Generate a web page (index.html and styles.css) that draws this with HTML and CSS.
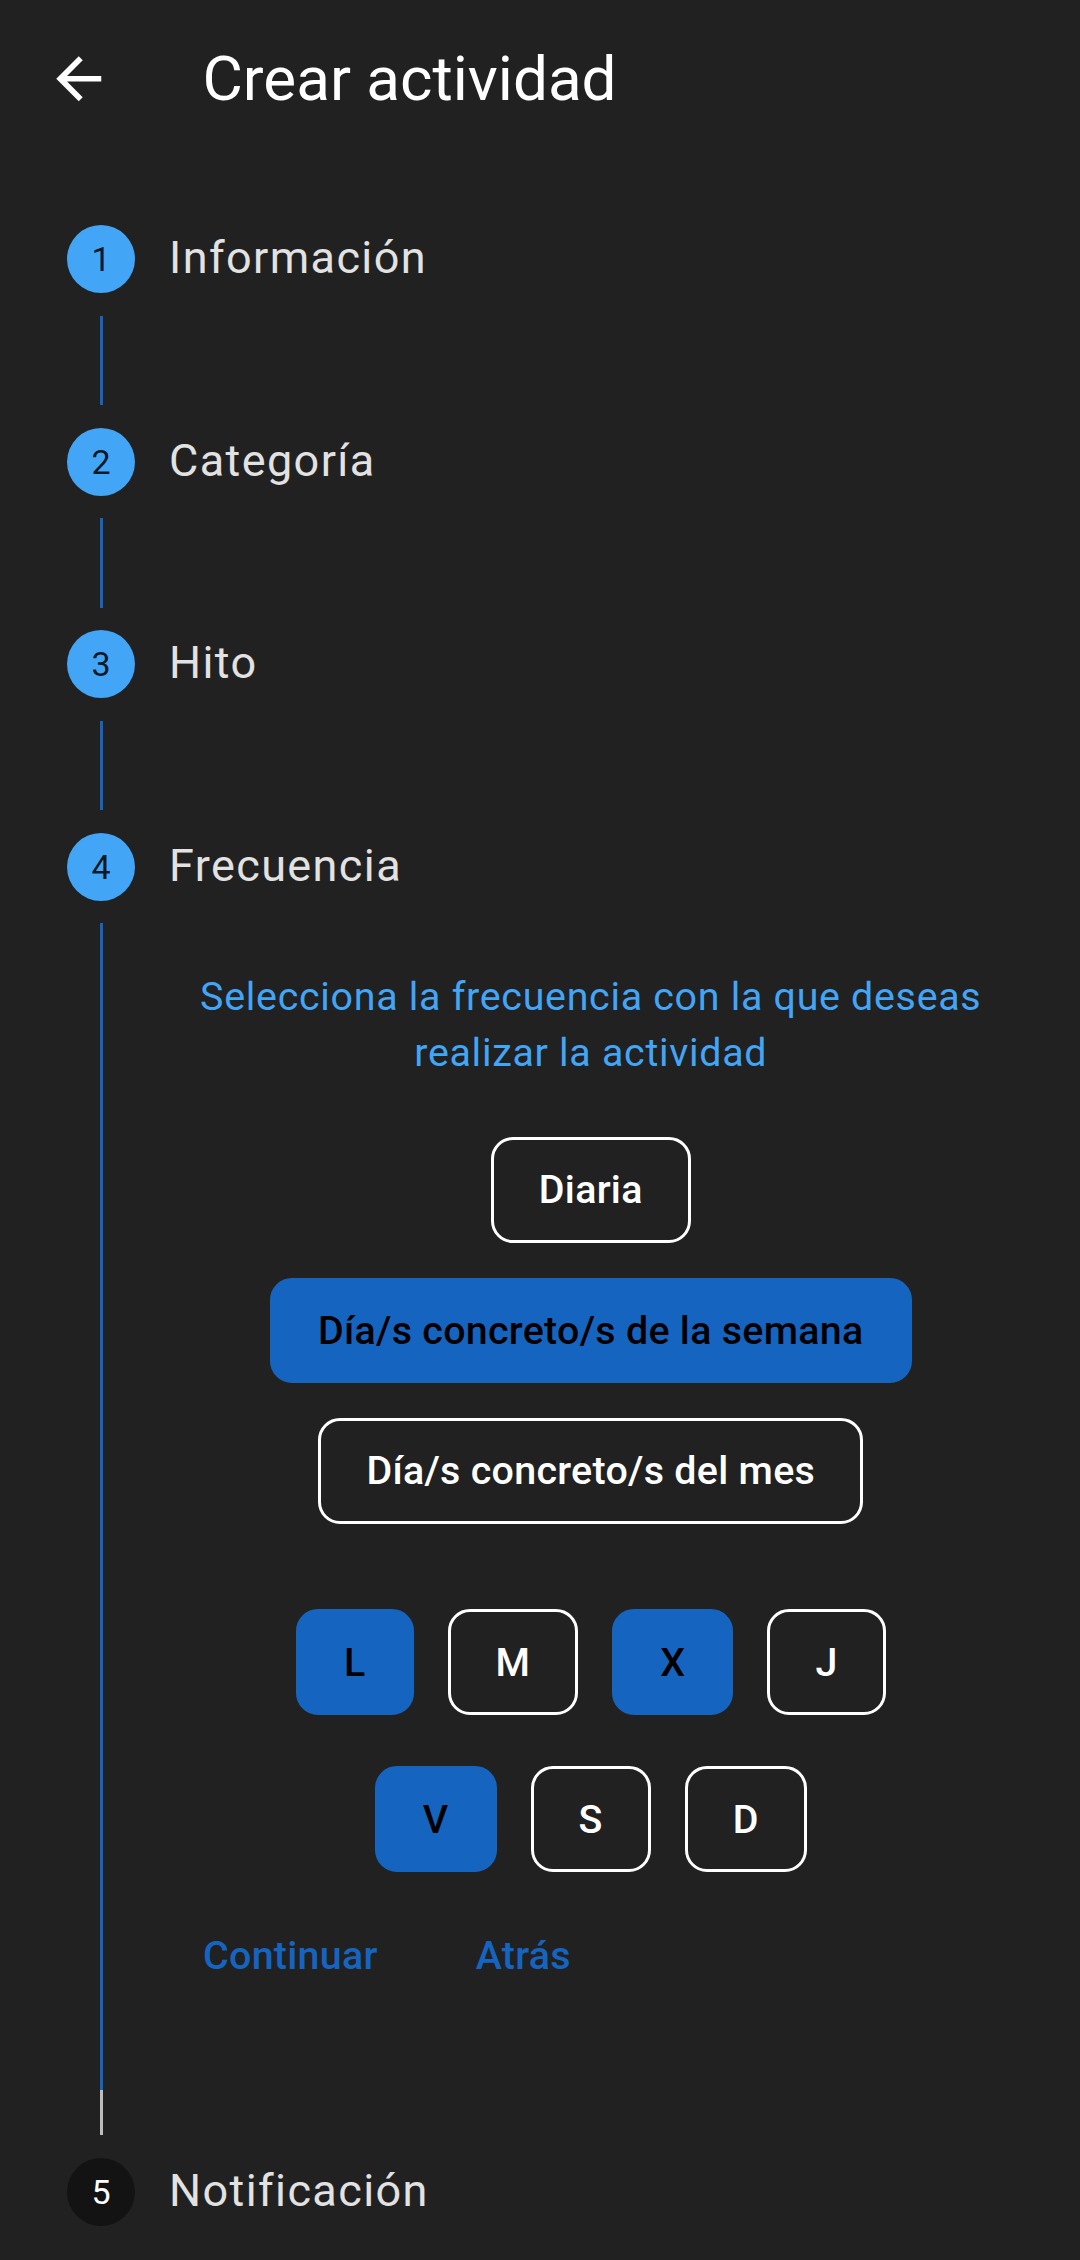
FILE: index.html
```html
<!DOCTYPE html>
<html lang="es">
<head>
<meta charset="utf-8">
<title>Crear actividad</title>
<link rel="stylesheet" href="styles.css">
</head>
<body>
<div class="screen">
  <header class="appbar">
    <div class="leading">
      <svg class="back" viewBox="0 0 24 24"><path d="M20 11H7.83l5.59-5.59L12 4l-8 8 8 8 1.41-1.41L7.83 13H20v-2z"/></svg>
    </div>
    <h1 class="title">Crear actividad</h1>
  </header>
  <main class="stepper">
    <section class="step">
      <div class="step-header"><span class="badge">1</span><span class="step-title">Información</span></div>
      <div class="connector"></div>
    </section>
    <section class="step">
      <div class="step-header"><span class="badge">2</span><span class="step-title">Categoría</span></div>
      <div class="connector"></div>
    </section>
    <section class="step">
      <div class="step-header"><span class="badge">3</span><span class="step-title">Hito</span></div>
      <div class="connector"></div>
    </section>
    <section class="step">
      <div class="step-header"><span class="badge">4</span><span class="step-title">Frecuencia</span></div>
      <div class="step-body">
        <div class="rail"><div class="rail-line"></div></div>
        <div class="step-content">
          <p class="prompt">Selecciona la frecuencia con la que deseas realizar la actividad</p>
          <div class="options">
            <button class="opt">Diaria</button>
            <button class="opt selected">Día/s concreto/s de la semana</button>
            <button class="opt">Día/s concreto/s del mes</button>
          </div>
          <div class="days">
            <div class="day-row">
              <button class="day selected">L</button>
              <button class="day">M</button>
              <button class="day selected">X</button>
              <button class="day">J</button>
            </div>
            <div class="day-row">
              <button class="day selected">V</button>
              <button class="day">S</button>
              <button class="day">D</button>
            </div>
          </div>
          <div class="controls">
            <button class="text-btn">Continuar</button>
            <button class="text-btn">Atrás</button>
          </div>
        </div>
      </div>
      <div class="connector connector-tail"></div>
    </section>
    <section class="step">
      <div class="step-header"><span class="badge badge-inactive">5</span><span class="step-title">Notificación</span></div>
    </section>
  </main>
</div>
</body>
</html>
```
FILE: styles.css
```css
* { box-sizing: border-box; margin: 0; padding: 0; }
html, body { background: #212121; }
body {
  width: 1080px;
  height: 2260px;
  overflow: hidden;
  font-family: Roboto, "Noto Sans", sans-serif;
  color: #e2e2e2;
}
.appbar {
  height: 157.5px;
  display: flex;
  align-items: center;
}
.leading {
  width: 157.5px;
  height: 157.5px;
  display: flex;
  align-items: center;
  justify-content: center;
  flex: none;
}
.back { width: 67.5px; height: 67.5px; fill: #ffffff; }
.title {
  margin-left: 45px;
  font-size: 62px;
  font-weight: 400;
  color: #ffffff;
  line-height: normal;
}
.stepper { padding-top: 67.5px; }
.step-header {
  display: flex;
  align-items: center;
  height: 68px;
  padding-left: 67px;
}
.badge {
  width: 68px;
  height: 68px;
  flex: none;
  border-radius: 50%;
  background: #42a5f5;
  color: rgba(0, 0, 0, 0.87);
  font-size: 34px;
  display: flex;
  align-items: center;
  justify-content: center;
}
.badge-inactive { background: #131313; color: #ffffff; }
.step-title {
  margin-left: 34px;
  margin-bottom: 3px;
  font-size: 45px;
  letter-spacing: 1.4px;
  color: #e2e2e2;
}
.connector {
  margin: 22.5px 0 22.5px 100px;
  width: 3px;
  height: 89.5px;
  background: #1565c0;
}
.connector-tail {
  margin-top: 0;
  height: 45px;
  background: #bdbdbd;
}
.step-body {
  display: flex;
  margin-top: 22.5px;
}
.rail {
  width: 169px;
  flex: none;
  padding-left: 100px;
  display: flex;
}
.rail-line { width: 3px; background: #1565c0; }
.step-content {
  flex: 1;
  padding: 46px 67.5px 67.5px 0;
}
.prompt {
  text-align: center;
  color: #42a5f5;
  font-size: 39.4px;
  line-height: 56px;
  letter-spacing: 0.7px;
}
.options {
  margin-top: 56px;
  display: flex;
  flex-direction: column;
  align-items: center;
  gap: 35px;
}
.opt, .day {
  height: 105.5px;
  padding: 0 45px;
  border: 3px solid #ffffff;
  border-radius: 22px;
  background: transparent;
  color: #ffffff;
  font-family: Roboto, "Noto Sans", sans-serif;
  font-weight: 500;
  font-size: 39.4px;
  letter-spacing: 0.28px;
}
.selected {
  background: #1565c0;
  border-color: #1565c0;
  color: #000000;
}
.days {
  margin-top: 85.5px;
  display: flex;
  flex-direction: column;
  align-items: center;
  gap: 51px;
}
.day-row { display: flex; gap: 34px; }
.day { height: 106px; padding: 0 45px; }
.controls {
  margin-top: 15.5px;
  height: 135px;
  display: flex;
  align-items: center;
  gap: 30px;
}
.text-btn {
  height: 112px;
  padding: 0 34px;
  border: 0;
  background: none;
  font-family: Roboto, "Noto Sans", sans-serif;
  font-weight: 500;
  font-size: 39.4px;
  letter-spacing: 0.28px;
  color: #1565c0;
}
```
